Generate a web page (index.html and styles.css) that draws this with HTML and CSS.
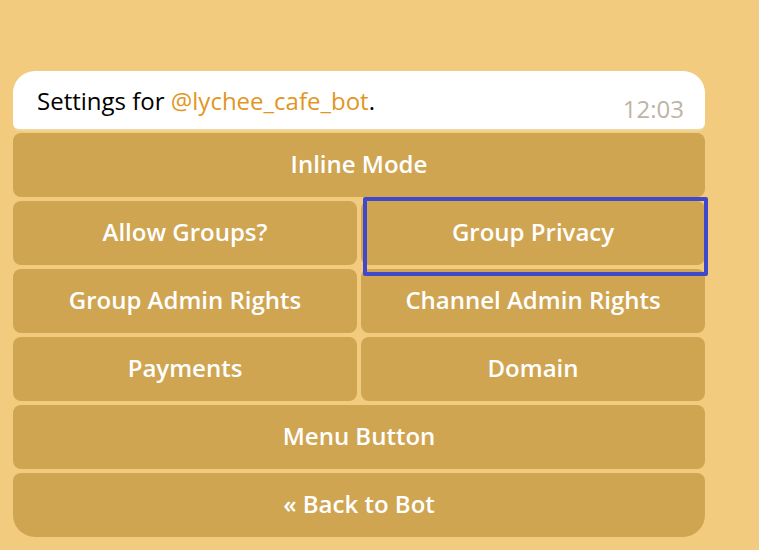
FILE: index.html
```html
<!DOCTYPE html>
<html>
<head>
<meta charset="utf-8">
<link rel="stylesheet" href="styles.css">
</head>
<body>
<div class="chat">
  <div class="bubble">
    <span class="msg">Settings for <span class="mention">@lychee_cafe_bot</span>.</span>
    <span class="time">12:03</span>
  </div>
  <div class="keyboard">
    <div class="row"><div class="btn">Inline Mode</div></div>
    <div class="row">
      <div class="btn">Allow Groups?</div>
      <div class="btn highlighted">Group Privacy<span class="focus"></span></div>
    </div>
    <div class="row">
      <div class="btn">Group Admin Rights</div>
      <div class="btn">Channel Admin Rights</div>
    </div>
    <div class="row">
      <div class="btn">Payments</div>
      <div class="btn">Domain</div>
    </div>
    <div class="row"><div class="btn">Menu Button</div></div>
    <div class="row last"><div class="btn">« Back to Bot</div></div>
  </div>
</div>
</body>
</html>
```

FILE: styles.css
```css
html, body {
  margin: 0;
  padding: 0;
}
body {
  background: #f3cb7e;
  width: 759px;
  height: 550px;
  overflow: hidden;
  font-family: "Open Sans", "Noto Sans", sans-serif;
}
.chat {
  padding: 71px 0 0 13px;
  width: 692px;
  display: flex;
  flex-direction: column;
  gap: 4px;
}
.bubble {
  background: #ffffff;
  height: 58px;
  border-radius: 22px 22px 6px 6px;
  box-shadow: 0 2px 0 #f0d79f;
  display: flex;
  justify-content: space-between;
  align-items: flex-start;
  padding: 0 21px 0 24px;
  box-sizing: border-box;
  position: relative;
}
.msg {
  font-size: 24px;
  color: #000;
  line-height: 32px;
  margin-top: 14px;
}
.mention {
  color: #e2961f;
}
.time {
  font-size: 24px;
  color: #bdb4a5;
  line-height: 32px;
  margin-top: 22px;
}
.keyboard {
  display: flex;
  flex-direction: column;
  gap: 4px;
}
.row {
  display: flex;
  gap: 4px;
}
.btn {
  flex: 1;
  height: 64px;
  box-sizing: border-box;
  padding-bottom: 3px;
  background: #d0a552;
  border-radius: 8px;
  color: #ffffff;
  font-weight: 600;
  font-size: 24px;
  display: flex;
  align-items: center;
  justify-content: center;
  position: relative;
}
.row.last .btn {
  border-radius: 8px 8px 22px 22px;
}
.focus {
  position: absolute;
  z-index: 2;
  left: 2px;
  top: -4px;
  right: -3px;
  bottom: -11px;
  border: 4px solid #4049cc;
  border-radius: 2px;
}
```
